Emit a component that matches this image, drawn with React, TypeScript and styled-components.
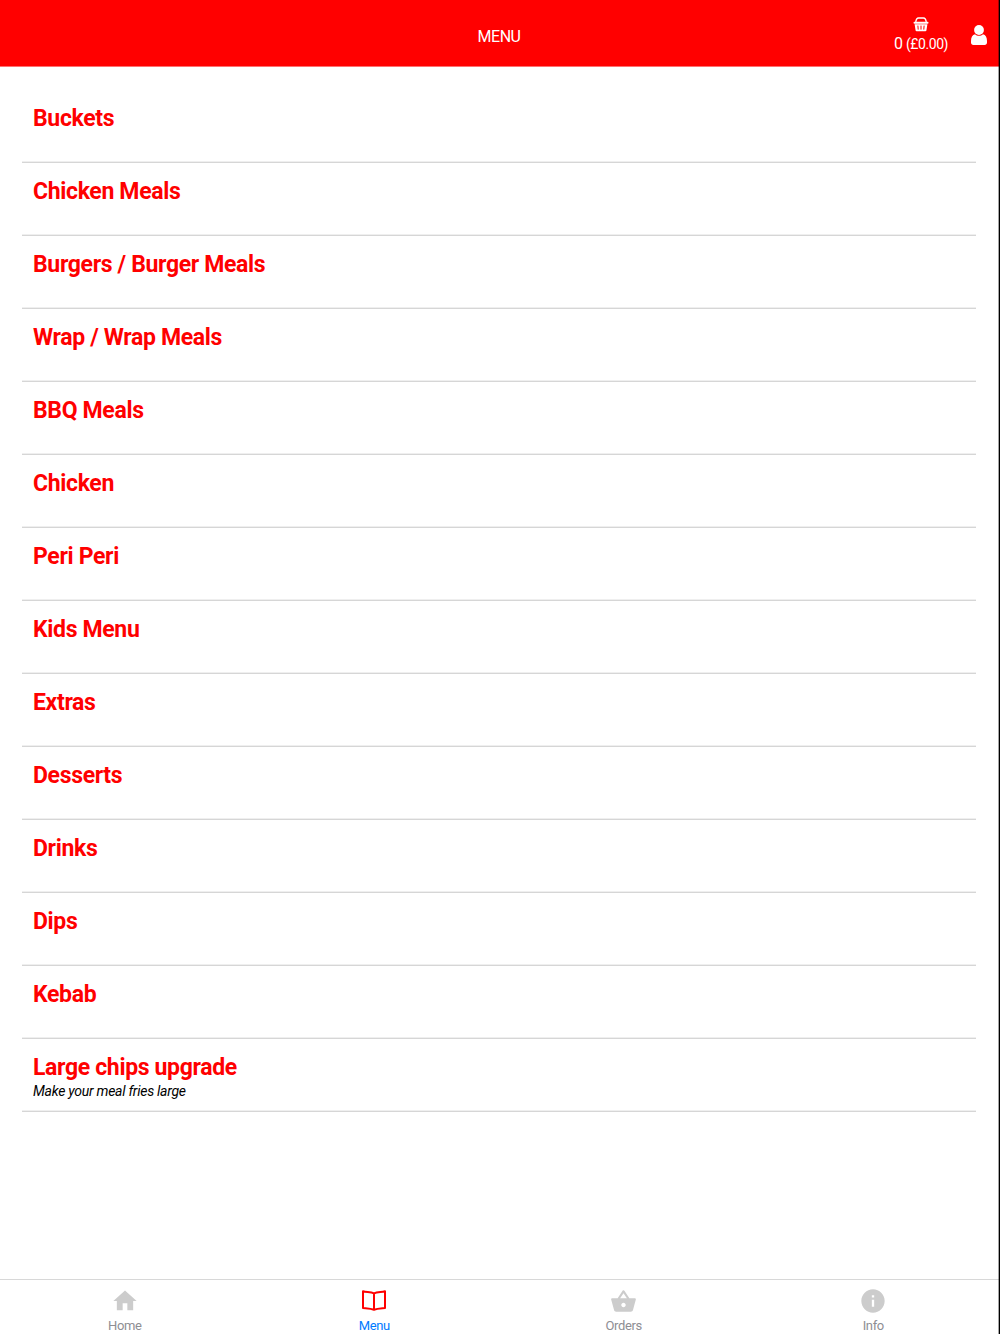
import React, { useState } from 'react';
import styled, { createGlobalStyle } from 'styled-components';
import { MdHome, MdInfo, MdShoppingBasket } from 'react-icons/md';

type Category = {
  name: string;
  desc?: string;
};

const categories: Category[] = [
  { name: 'Buckets' },
  { name: 'Chicken Meals' },
  { name: 'Burgers / Burger Meals' },
  { name: 'Wrap / Wrap Meals' },
  { name: 'BBQ Meals' },
  { name: 'Chicken' },
  { name: 'Peri Peri' },
  { name: 'Kids Menu' },
  { name: 'Extras' },
  { name: 'Desserts' },
  { name: 'Drinks' },
  { name: 'Dips' },
  { name: 'Kebab' },
  { name: 'Large chips upgrade', desc: 'Make your meal fries large' },
];

const BasketIcon = () => (
  <svg width="16" height="15" viewBox="0 0 16 15" fill="none">
    <path d="M2.7 5.5C3 2.4 4 1 5.6 1h4.8c1.6 0 2.6 1.4 2.9 4.5" stroke="#fff" strokeWidth="1.3" />
    <rect x="0.5" y="4.8" width="15" height="2" rx="1" fill="#fff" />
    <path d="M1.6 7.3h12.8l-1 6.1a1 1 0 0 1-1 .8H3.6a1 1 0 0 1-1-.8z" fill="#fff" />
    <path d="M4.9 8.6l.3 4M8 8.6v4M11.1 8.6l-.3 4" stroke="#f00" strokeWidth="1" />
  </svg>
);

const PersonIcon = () => (
  <svg width="16" height="20" viewBox="0 0 16 20" fill="#fff">
    <circle cx="8" cy="5" r="4.9" />
    <path d="M4 9.2c2.4 2 5.6 2 8 0 2.7.5 4 3 4 6.8v1.5c0 1.4-1 2.4-2.4 2.4H2.4C1 19.9 0 18.9 0 17.5V16c0-3.8 1.3-6.3 4-6.8z" />
  </svg>
);

const BookIcon = () => (
  <svg width="24" height="22" viewBox="0 0 24 22" fill="none" stroke="#f00" strokeWidth="2">
    <path
      d="M1 1.3c3.5 1 7.5.5 11 2 3.5-1.5 7.5-1 11-2v16.8c-3.5.4-7.5.5-11 1.7-3.5-1.2-7.5-1.3-11-1.7zM12 3.3v16.5"
      strokeLinejoin="round"
    />
  </svg>
);

const tabs = [
  { label: 'Home', icon: <MdHome size={28} /> },
  { label: 'Menu', icon: <BookIcon /> },
  { label: 'Orders', icon: <MdShoppingBasket size={27} /> },
  { label: 'Info', icon: <MdInfo size={28} /> },
];

export default function App() {
  const [active, setActive] = useState('Menu');

  return (
    <>
      <GlobalStyle />
      <Screen>
        <Header>
          <Title>MENU</Title>
          <HeaderActions>
            <BasketButton>
              <BasketIcon />
              <BasketText>
                0 <small>(£0.00)</small>
              </BasketText>
            </BasketButton>
            <PersonIcon />
          </HeaderActions>
        </Header>
        <CategoryList>
          {categories.map((category) => (
            <CategoryRow key={category.name}>
              <CategoryName>{category.name}</CategoryName>
              {category.desc && <CategoryDesc>{category.desc}</CategoryDesc>}
            </CategoryRow>
          ))}
        </CategoryList>
        <TabBar>
          {tabs.map((tab) => (
            <Tab
              key={tab.label}
              $active={tab.label === active}
              onClick={() => setActive(tab.label)}
            >
              <TabIcon>{tab.icon}</TabIcon>
              <TabLabel>{tab.label}</TabLabel>
            </Tab>
          ))}
        </TabBar>
      </Screen>
    </>
  );
}

const GlobalStyle = createGlobalStyle`
  * {
    box-sizing: border-box;
  }
  body {
    margin: 0;
    background: #fff;
    font-family: Roboto, sans-serif;
  }
`;

const Screen = styled.div`
  position: relative;
  display: flex;
  flex-direction: column;
  height: 1334px;
  border-right: 1px solid #000;

  &::after {
    content: '';
    position: absolute;
    top: 0;
    right: 0;
    bottom: 0;
    width: 1px;
    background: rgba(0, 0, 0, 0.35);
  }
`;

const Header = styled.header`
  display: grid;
  grid-template-columns: 1fr auto 1fr;
  align-items: center;
  height: 67px;
  padding: 4px 12px 0 11px;
  border-bottom: 1px solid #ff7070;
  background: #f00;
  color: #fff;
`;

const Title = styled.h1`
  grid-column: 2;
  margin: 4px 0 0;
  font-size: 16px;
  font-weight: 400;
  letter-spacing: -0.5px;
  line-height: 20px;
`;

const HeaderActions = styled.div`
  display: flex;
  justify-content: flex-end;
  align-items: center;
  gap: 23px;
`;

const BasketButton = styled.div`
  display: flex;
  flex-direction: column;
  align-items: center;
`;

const BasketText = styled.span`
  margin-top: 2px;
  font-size: 16px;
  letter-spacing: -0.45px;
  line-height: 19px;

  small {
    font-size: 14px;
  }
`;

const CategoryList = styled.ul`
  flex: 1;
  margin: 0;
  padding: 23px 23px 0 22px;
  list-style: none;
`;

const CategoryRow = styled.li`
  height: 73.04px;
  padding: 14px 11px 0;
  border-bottom: 1px solid #d6d6d6;
  box-shadow: inset 0 -1px 0 #efefef;
`;

const CategoryName = styled.h2`
  margin: 0;
  color: #f00;
  font-size: 23px;
  font-weight: 700;
  letter-spacing: -0.34px;
  line-height: 30px;
`;

const CategoryDesc = styled.p`
  margin: -1px 0 0;
  color: #000;
  font-size: 14px;
  font-style: italic;
  letter-spacing: -0.27px;
  line-height: 18px;
`;

const TabBar = styled.nav`
  display: flex;
  height: 55px;
  padding-right: 1px;
  border-top: 1px solid #d8d8d8;
`;

const Tab = styled.div<{ $active: boolean }>`
  display: flex;
  flex: 1;
  flex-direction: column;
  align-items: center;
  color: ${({ $active }) => ($active ? '#007aff' : '#8e8e93')};
  cursor: pointer;
`;

const TabIcon = styled.span`
  display: flex;
  align-items: center;
  justify-content: center;
  height: 28px;
  margin-top: 7px;
  color: #ccc;
`;

const TabLabel = styled.span`
  margin-top: 3px;
  font-size: 13px;
  letter-spacing: -0.35px;
  line-height: 16px;
`;
